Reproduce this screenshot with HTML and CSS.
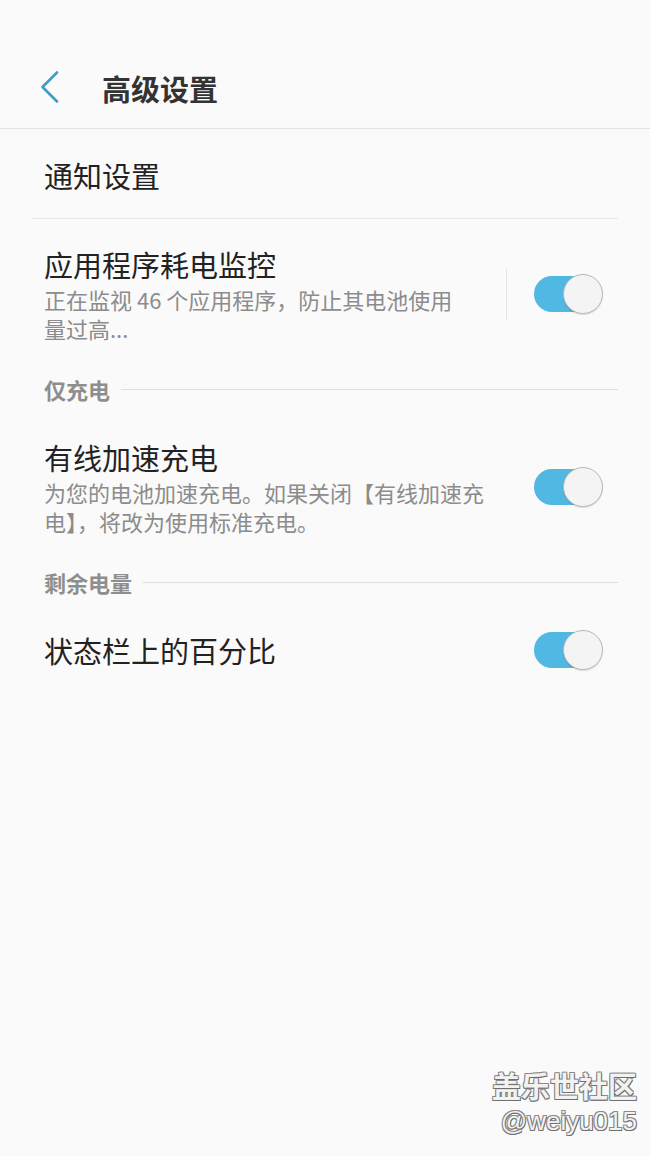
FILE: index.html
```html
<!DOCTYPE html>
<html lang="zh-CN">
<head>
<meta charset="utf-8">
<title>高级设置</title>
<link rel="stylesheet" href="styles.css">
</head>
<body>
<div class="screen">
  <header class="appbar">
    <svg class="back" width="26" height="36" viewBox="0 0 26 36" aria-hidden="true">
      <polyline points="20,2.5 5.5,17 20,31.5" fill="none" stroke="#3f9cc4" stroke-width="2.6" stroke-linecap="round" stroke-linejoin="round"/>
    </svg>
    <h1 class="title">高级设置</h1>
  </header>

  <main class="list">
    <div class="row row-simple">
      <div class="row-title">通知设置</div>
    </div>

    <div class="row row-first">
      <div class="text text-narrow">
        <div class="row-title">应用程序耗电监控</div>
        <div class="row-sub">正在监视 46 个应用程序，防止其电池使用量过高...</div>
      </div>
      <div class="vdiv"></div>
      <div class="toggle on"><span class="track"></span><span class="knob"></span></div>
    </div>

    <div class="section">
      <span class="section-label">仅充电</span>
      <span class="section-line"></span>
    </div>

    <div class="row row-after">
      <div class="text text-wide">
        <div class="row-title">有线加速充电</div>
        <div class="row-sub">为您的电池加速充电。如果关闭【有线加速充电】，将改为使用标准充电。</div>
      </div>
      <div class="toggle on"><span class="track"></span><span class="knob"></span></div>
    </div>

    <div class="section">
      <span class="section-label">剩余电量</span>
      <span class="section-line"></span>
    </div>

    <div class="row row-after">
      <div class="text text-wide">
        <div class="row-title">状态栏上的百分比</div>
      </div>
      <div class="toggle on"><span class="track"></span><span class="knob"></span></div>
    </div>
  </main>

  <div class="watermark">
    <div class="wm-cn">盖乐世社区</div>
    <div class="wm-id">@weiyu015</div>
  </div>
</div>
</body>
</html>
```

FILE: styles.css
```css
* { box-sizing: border-box; }

html, body {
  margin: 0;
  padding: 0;
  background: #fafafa;
}

body {
  font-family: "Noto Sans CJK SC", "Noto Sans", sans-serif;
  color: #222;
}

.screen {
  position: relative;
  width: 650px;
  height: 1156px;
  overflow: hidden;
  background: #fafafa;
}

/* App bar */
.appbar {
  height: 129px;
  padding-top: 48px;
  display: flex;
  align-items: center;
  border-bottom: 1px solid #e2e2e2;
}

.back {
  margin-left: 37px;
  flex: none;
}

.title {
  margin: 0 0 0 39px;
  font-size: 29px;
  line-height: 40px;
  font-weight: 700;
  color: #333;
}

/* List */
.list {
  margin: 0 32px;
}

.row {
  display: flex;
  align-items: center;
  padding: 0 15px 0 12px;
}

.row-simple {
  padding-top: 26px;
  padding-bottom: 23px;
  border-bottom: 1px solid #e6e6e6;
}

.row-first {
  padding-top: 25px;
}

.row-after {
  padding-top: 33px;
}

.row-title {
  font-size: 29px;
  line-height: 40px;
  color: #222;
}

.row-sub {
  margin-top: 1px;
  font-size: 22px;
  line-height: 29px;
  color: #8c8c8c;
}

.text {
  flex: 1;
  min-width: 0;
}

.text-narrow {
  margin-right: 38px;
}

.text-wide {
  margin-right: 40px;
}

.vdiv {
  flex: none;
  width: 1px;
  height: 52px;
  background: #e4e4e4;
  margin-right: 27px;
}

/* Toggle */
.toggle {
  position: relative;
  flex: none;
  width: 69px;
  height: 40px;
}

.track {
  position: absolute;
  left: 0;
  top: 2px;
  width: 62px;
  height: 36px;
  border-radius: 18px;
  background: #50b8e2;
}

.knob {
  position: absolute;
  right: 0;
  top: 0;
  width: 40px;
  height: 40px;
  border-radius: 50%;
  background: #f4f4f4;
  border: 1px solid #b9b9b9;
  box-shadow: 0 1px 1px rgba(0, 0, 0, 0.12);
}

/* Section headers */
.section {
  display: flex;
  align-items: center;
  margin-top: 31px;
  padding-left: 12px;
}

.section-label {
  font-size: 22px;
  line-height: 30px;
  font-weight: 700;
  color: #8e8e8e;
}

.section-line {
  flex: 1;
  height: 1px;
  margin-left: 11px;
  background: #dedede;
}

/* Watermark overlay */
.watermark {
  position: absolute;
  right: 13px;
  bottom: 18px;
  text-align: right;
  color: #f2f2f2;
  text-shadow:
    1px 1px 0 #6f6f6f,
    -1px -1px 0 #8a8a8a,
    1px -1px 0 #8a8a8a,
    -1px 1px 0 #7a7a7a,
    0 1px 0 #6f6f6f;
}

.wm-cn {
  font-family: "Noto Sans CJK SC", sans-serif;
  font-size: 29px;
  line-height: 38px;
  font-weight: 700;
}

.wm-id {
  font-family: "Liberation Sans", Arial, sans-serif;
  font-size: 26px;
  line-height: 34px;
}
```
